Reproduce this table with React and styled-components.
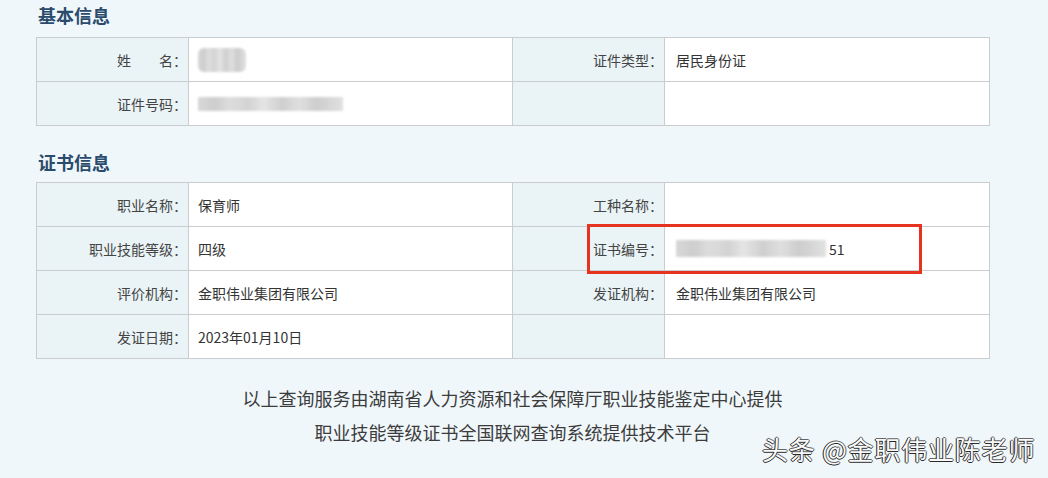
import React from "react";
import styled, { createGlobalStyle } from "styled-components";

const GlobalStyle = createGlobalStyle`
  body {
    margin: 0;
    background: #eff7fa;
    font-family: "Noto Sans CJK SC", "Liberation Sans", sans-serif;
  }
`;

const Page = styled.div`
  position: relative;
  width: 1048px;
  height: 478px;
  overflow: hidden;
  background: #eff7fa;
`;

const Title = styled.h2`
  margin: 0;
  padding: ${(p) => p.$top}px 0 0 38px;
  height: ${(p) => p.$height}px;
  box-sizing: border-box;
  font-size: 18px;
  line-height: 18px;
  font-weight: 700;
  color: #2b4b6d;
  letter-spacing: 0;
`;

const Grid = styled.div`
  position: relative;
  margin-left: 36px;
  width: 953px;
  display: grid;
  grid-template-columns: 152px 324px 152px 325px;
  border-top: 1px solid #c9cdd0;
  border-left: 1px solid #c9cdd0;
`;

const Label = styled.div`
  height: 44px;
  box-sizing: border-box;
  border-right: 1px solid #c9cdd0;
  border-bottom: 1px solid #c9cdd0;
  background: #eaf4f7;
  display: flex;
  align-items: center;
  justify-content: flex-end;
  padding-right: 1px;
  font-size: 14px;
  color: #444;
  white-space: pre;
`;

const Value = styled.div`
  height: 44px;
  box-sizing: border-box;
  border-right: 1px solid #c9cdd0;
  border-bottom: 1px solid #c9cdd0;
  background: #fff;
  display: flex;
  align-items: center;
  padding-left: ${(p) => (p.$right ? 11 : 9)}px;
  font-size: 14px;
  color: #333;
`;

const Blur = styled.span`
  display: inline-block;
  width: ${(p) => p.$w}px;
  height: ${(p) => p.$h}px;
  border-radius: ${(p) => (p.$round ? "6px" : "1px")};
  background: linear-gradient(
    90deg,
    #d4d4d4 0%,
    #c9c9c9 12%,
    #dadada 22%,
    #cfcfcf 35%,
    #e2e2e2 45%,
    #cbcbcb 58%,
    #dcdcdc 70%,
    #c8c8c8 82%,
    #dedede 100%
  );
  filter: blur(1px);
  opacity: 0.9;
`;

const Highlight = styled.div`
  position: absolute;
  left: 550px;
  top: 41px;
  width: 335px;
  height: 50px;
  box-sizing: border-box;
  border: 3px solid #e5331f;
  pointer-events: none;
`;

const Footer = styled.div`
  margin-top: 22px;
  width: 1025px;
  text-align: center;
  font-size: 18px;
  line-height: 34px;
  color: #3c3c3c;
`;

const Watermark = styled.div`
  position: absolute;
  left: 762px;
  top: 433px;
  font-size: 26px;
  line-height: 32px;
  color: #fafafa;
  letter-spacing: 0.8px;
  text-shadow: -1px 0 #1e1e1e, 0 1px #2a2a2a, 1px 0 #666, 0 -1px #666;
`;

const basic = [
  ["姓　　名：", <Blur $w={48} $h={24} $round />, "证件类型：", "居民身份证"],
  ["证件号码：", <Blur $w={145} $h={14} />, "", ""],
];

const cert = [
  ["职业名称：", "保育师", "工种名称：", ""],
  [
    "职业技能等级：",
    "四级",
    "证书编号：",
    <>
      <Blur $w={150} $h={17} />
      <span style={{ marginLeft: 3 }}>51</span>
    </>,
  ],
  ["评价机构：", "金职伟业集团有限公司", "发证机构：", "金职伟业集团有限公司"],
  ["发证日期：", "2023年01月10日", "", ""],
];

const InfoTable = ({ rows, children }) => (
  <Grid>
    {rows.map((row, i) => (
      <React.Fragment key={i}>
        <Label>{row[0]}</Label>
        <Value>{row[1]}</Value>
        <Label>{row[2]}</Label>
        <Value $right>{row[3]}</Value>
      </React.Fragment>
    ))}
    {children}
  </Grid>
);

export default function App() {
  return (
    <Page>
      <GlobalStyle />
      <Title $top={6} $height={37}>基本信息</Title>
      <InfoTable rows={basic} />
      <Title $top={27} $height={56}>证书信息</Title>
      <InfoTable rows={cert}>
        <Highlight />
      </InfoTable>
      <Footer>
        <div>以上查询服务由湖南省人力资源和社会保障厅职业技能鉴定中心提供</div>
        <div>职业技能等级证书全国联网查询系统提供技术平台</div>
      </Footer>
      <Watermark>头条 @金职伟业陈老师</Watermark>
    </Page>
  );
}
